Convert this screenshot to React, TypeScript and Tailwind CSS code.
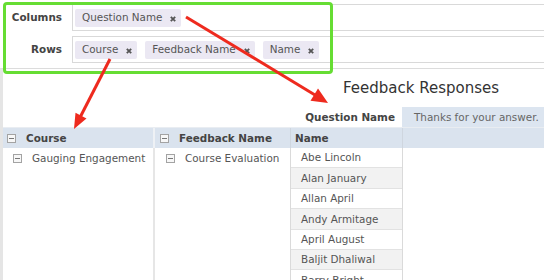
import React from "react"

const names = [
  "Abe Lincoln",
  "Alan January",
  "Allan April",
  "Andy Armitage",
  "April August",
  "Baljit Dhaliwal",
  "Barry Bright",
]

function Collapse() {
  return (
    <span className="flex h-[9px] w-[9px] shrink-0 items-center justify-center border border-[#a3a3a3] bg-[#f7f7f7]">
      <span className="h-px w-[5px] bg-[#777]" />
    </span>
  )
}

function Pill({ label }: { label: string }) {
  return (
    <span className="flex h-[18px] items-center gap-[8px] rounded-[2px] bg-[#ebe8f3] pl-[7px] pr-[5px] text-[#555]">
      {label}
      <svg width="6" height="6" viewBox="0 0 6 6" className="mt-[2px]">
        <path d="M0.8 0.8 L5.2 5.2 M5.2 0.8 L0.8 5.2" stroke="#555" strokeWidth="1.8" />
      </svg>
    </span>
  )
}

function FieldRow({ label, pills }: { label: string; pills: string[] }) {
  return (
    <div className="flex h-[27px] shrink-0 items-center">
      <div className="w-[72px] pr-[10px] text-right font-bold text-[#444]">{label}</div>
      <div className="flex h-full flex-1 items-center gap-[8px] border border-r-0 border-[#d9d9d9] pl-[2px]">
        {pills.map((p) => (
          <Pill key={p} label={p} />
        ))}
      </div>
    </div>
  )
}

export default function App() {
  return (
    <div className="relative h-[280px] w-[544px] overflow-hidden bg-white font-['DejaVu_Sans',sans-serif] text-[10.4px] leading-none">
      {/* field chooser */}
      <div className="flex h-[68px] flex-col gap-[5px] pt-[4px]">
        <FieldRow label="Columns" pills={["Question Name"]} />
        <FieldRow label="Rows" pills={["Course", "Feedback Name", "Name"]} />
      </div>

      {/* pivot table */}
      <div className="flex h-[212px] flex-col border-l-[3px] border-t border-l-[#e5e5e5] border-t-[#dcdcdc]">
        <div className="h-[38px] shrink-0 pl-[340px] pt-[12px] text-[15px] text-[#333]">Feedback Responses</div>

        <div className="flex h-[20px] shrink-0 items-center">
          <div className="w-[399px] pr-[7px] text-right font-bold text-[#444]">Question Name</div>
          <div className="flex h-full flex-1 items-center bg-[#dce5f0] pl-[12px] text-[#666]">
            Thanks for your answer.
          </div>
        </div>

        <div className="flex h-[21px] shrink-0 border-t border-[#e9edf2] bg-[#dae3ee] font-bold text-[#444]">
          <div className="flex w-[150px] items-center gap-[10px] pl-[4px]">
            <Collapse />
            Course
          </div>
          <div className="w-[2px] bg-[#eef1f5]" />
          <div className="flex w-[135px] items-center gap-[10px] pl-[5px]">
            <Collapse />
            Feedback Name
          </div>
          <div className="flex w-[113px] items-center border-x border-[#cfd6df] pl-[4px]">Name</div>
          <div className="flex-1" />
        </div>

        <div className="flex min-h-0 flex-1 text-[#555]">
          <div className="w-[150px]">
            <div className="flex h-[20px] items-center gap-[10px] pl-[10px]">
              <Collapse />
              Gauging Engagement
            </div>
          </div>
          <div className="w-[2px] bg-[#e6e6e6]" />
          <div className="w-[135px]">
            <div className="flex h-[20px] items-center gap-[10px] pl-[11px]">
              <Collapse />
              Course Evaluation
            </div>
          </div>
          <div className="flex w-[113px] flex-col border-x border-[#dadada]">
            {names.map((n, i) => (
              <div
                key={n}
                className={
                  "flex h-[20.4px] shrink-0 items-center border-b border-[#e2e2e2] pl-[10px] " +
                  (i % 2 === 1 ? "bg-[#f2f2f2]" : "bg-white")
                }
              >
                {n}
              </div>
            ))}
          </div>
          <div className="flex-1" />
        </div>
      </div>

      {/* annotation overlay */}
      <div className="pointer-events-none absolute left-[3px] top-[2px] h-[72px] w-[330px] rounded-[4px] border-[3px] border-[#66dd33]" />
      <svg className="pointer-events-none absolute left-0 top-0" width="544" height="280">
        <line x1="110" y1="59" x2="80.5" y2="116.5" stroke="#ee2a1e" strokeWidth="3" />
        <polygon points="74,129 86.5,118.5 75.5,112.8" fill="#ee2a1e" />
        <line x1="186" y1="17" x2="315" y2="95" stroke="#ee2a1e" strokeWidth="3" />
        <polygon points="328,103 310.5,100.8 318,88.5" fill="#ee2a1e" />
      </svg>
    </div>
  )
}
